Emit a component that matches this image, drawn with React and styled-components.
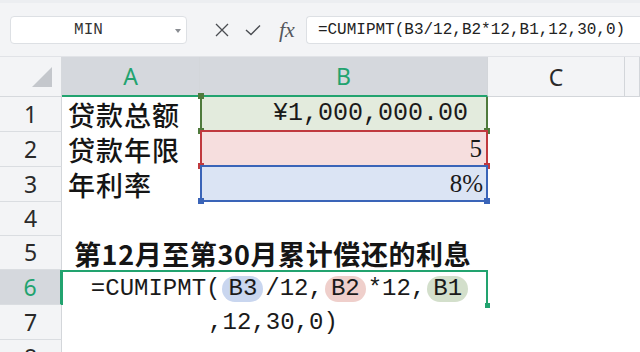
import React from 'react';
import styled, { createGlobalStyle, css } from 'styled-components';

const GlobalStyle = createGlobalStyle`
	html, body {
		margin: 0;
		padding: 0;
		background: #ffffff;
		overflow: hidden;
	}
	* {
		box-sizing: border-box;
	}
`;

const tones = {
	green: { bg: '#e3ebdd', line: '#4f7a3c', chip: '#d3dfcb' },
	red: { bg: '#f6dede', line: '#c0393e', chip: '#efcfcb' },
	blue: { bg: '#dbe4f4', line: '#3a64b8', chip: '#c9d6ef' },
};

const cjk = `'Noto Sans CJK SC', 'Noto Sans', sans-serif`;
const mono = `'Liberation Mono', 'DejaVu Sans Mono', monospace`;

const Page = styled.div`
	width: 640px;
	height: 352px;
	overflow: hidden;
	background: #fff;
`;

const Toolbar = styled.div`
	height: 57px;
	display: flex;
	align-items: center;
	padding-left: 10px;
	background: #f3f4f6;
	border-top: 3px solid #eceef1;
	border-bottom: 1px solid #e1e3e7;
`;

const NameBox = styled.div`
	width: 177px;
	height: 28px;
	display: flex;
	align-items: center;
	background: #fff;
	border: 1px solid #dde0e4;
	border-radius: 4px;
	position: relative;
	font-family: ${mono};
	font-size: 16px;
	color: #333;
	span {
		flex: 1;
		text-align: center;
		padding-right: 20px;
	}
	&::after {
		content: '';
		position: absolute;
		right: 5px;
		top: 12px;
		border-left: 3px solid transparent;
		border-right: 3px solid transparent;
		border-top: 4px solid #8a8d92;
	}
`;

const Actions = styled.div`
	display: flex;
	align-items: center;
	gap: 16px;
	margin-left: 28px;
	margin-right: 11px;
	color: #4a4d52;
`;

const Fx = styled.span`
	font-family: 'Liberation Serif', serif;
	font-style: italic;
	font-size: 22px;
	color: #55585d;
	margin-left: 2px;
`;

const FormulaBox = styled.div`
	flex: 1;
	height: 28px;
	display: flex;
	align-items: center;
	padding-left: 11px;
	background: #fff;
	border: 1px solid #dde0e4;
	border-right: none;
	border-radius: 4px 0 0 4px;
	font-family: ${mono};
	font-size: 16px;
	color: #222;
	white-space: nowrap;
	overflow: hidden;
`;

const Grid = styled.div`
	display: grid;
	grid-template-columns: 62px 138px 288px 137px 1fr;
	grid-template-rows: 40px 35px 35px 35px 34px 34px 35px 35px 35px;
`;

const Corner = styled.div`
	background: #f3f4f6;
	border-right: 1px solid #d6d9dd;
	border-bottom: 1px solid #d6d9dd;
	position: relative;
	&::after {
		content: '';
		position: absolute;
		right: 9px;
		bottom: 9px;
		border-left: 20px solid transparent;
		border-bottom: 20px solid #c4c7cc;
	}
`;

const ColHead = styled.div`
	display: flex;
	align-items: center;
	justify-content: center;
	font-family: 'Noto Sans', sans-serif;
	font-size: 23px;
	border-right: 1px solid #d3d6da;
	${(p) =>
		p.$active
			? css`
					background: #d5d8dd;
					color: #22a36f;
					border-bottom: 2px solid #22a36f;
			  `
			: css`
					background: #f3f4f6;
					color: #2a2a2a;
					border-bottom: 1px solid #d3d6da;
			  `}
`;

const RowHead = styled.div`
	display: flex;
	align-items: center;
	justify-content: center;
	font-family: 'Noto Sans', sans-serif;
	font-size: 23px;
	line-height: 1;
	border-right: 1px solid #d3d6da;
	border-bottom: 1px solid #dadde1;
	${(p) =>
		p.$active
			? css`
					background: #d5d8dd;
					color: #22a36f;
					border-right: 2px solid #22a36f;
			  `
			: css`
					background: #f3f4f6;
					color: #2a2a2a;
			  `}
`;

const Label = styled.div`
	display: flex;
	align-items: center;
	white-space: nowrap;
	line-height: 1;
	grid-column: ${(p) => p.$span || 'auto'};
	font-family: ${cjk};
	font-size: 27px;
	letter-spacing: ${(p) => (p.$bold ? 0.6 : 1)}px;
	font-weight: ${(p) => (p.$bold ? 700 : 500)};
	color: #151515;
	padding-left: ${(p) => (p.$indent ? 12 : 6)}px;
`;

const RefCell = styled.div`
	position: relative;
	display: flex;
	align-items: center;
	justify-content: flex-end;
	padding-right: ${(p) => p.$pad}px;
	background: ${(p) => tones[p.$tone].bg};
	border: 2px solid ${(p) => tones[p.$tone].line};
	border-top-width: ${(p) => (p.$tone === 'green' ? 0 : 2)}px;
	margin-top: ${(p) => (p.$tone === 'green' ? 0 : -2)}px;
	font-family: ${(p) => (p.$mono ? mono : `'Liberation Serif', serif`)};
	font-size: 25px;
	line-height: 1;
	color: #1a1a1a;
`;

const Handle = styled.i`
	position: absolute;
	width: 6px;
	height: 6px;
	background: ${(p) => tones[p.$tone].line};
	${(p) => (p.$left ? 'left: -4px;' : 'right: -4px;')}
	${(p) => (p.$top ? 'top: -4px;' : 'bottom: -4px;')}
`;

const EditCell = styled.div`
	grid-column: 2 / 4;
	position: relative;
	display: flex;
	align-items: center;
	justify-content: center;
	padding-left: 12px;
	border: 2px solid #22a36f;
	border-bottom: none;
	margin-left: -1px;
	font-family: ${mono};
	font-size: 24px;
	color: #1a1a1a;
	white-space: nowrap;
`;

const EditHandle = styled.i`
	position: absolute;
	right: -4px;
	bottom: -3px;
	width: 5px;
	height: 5px;
	background: #22a36f;
`;

const WrapLine = styled.div`
	grid-column: 2 / 4;
	display: flex;
	align-items: center;
	justify-content: center;
	padding-right: 4px;
	font-family: ${mono};
	font-size: 24px;
	color: #1a1a1a;
	white-space: nowrap;
`;

const Chip = styled.span`
	display: inline-block;
	padding: 0 6px;
	margin: 0 2px;
	line-height: 26px;
	border-radius: 13px;
	background: ${(p) => tones[p.$tone].chip};
`;

const Blank = styled.div``;

const CloseIcon = () => (
	<svg width="14" height="14" viewBox="0 0 14 14" fill="none" stroke="currentColor" strokeWidth="1.3">
		<path d="M1 1 L13 13 M13 1 L1 13" />
	</svg>
);

const CheckIcon = () => (
	<svg width="16" height="12" viewBox="0 0 16 12" fill="none" stroke="currentColor" strokeWidth="1.4">
		<path d="M1 6 L6 10.5 L15 1.5" />
	</svg>
);

const refRows = [
	{ label: '贷款总额', value: '¥1,000,000.00', tone: 'green', mono: true, pad: 18 },
	{ label: '贷款年限', value: '5', tone: 'red', pad: 4 },
	{ label: '年利率', value: '8%', tone: 'blue', pad: 3 },
];

const App = () => {
	return (
		<Page>
			<GlobalStyle />
			<Toolbar>
				<NameBox>
					<span>MIN</span>
				</NameBox>
				<Actions>
					<CloseIcon />
					<CheckIcon />
					<Fx>fx</Fx>
				</Actions>
				<FormulaBox>=CUMIPMT(B3/12,B2*12,B1,12,30,0)</FormulaBox>
			</Toolbar>
			<Grid>
				<Corner />
				<ColHead $active>A</ColHead>
				<ColHead $active>B</ColHead>
				<ColHead>C</ColHead>
				<ColHead />

				{refRows.map((r, i) => (
					<React.Fragment key={r.label}>
						<RowHead>{i + 1}</RowHead>
						<Label>{r.label}</Label>
						<RefCell $tone={r.tone} $mono={r.mono} $pad={r.pad}>
							{r.value}
							{r.tone === 'green' && <Handle $tone={r.tone} $left $top />}
							<Handle $tone={r.tone} $left />
							<Handle $tone={r.tone} />
						</RefCell>
						<Blank />
						<Blank />
					</React.Fragment>
				))}

				<RowHead>4</RowHead>
				<Blank />
				<Blank />
				<Blank />
				<Blank />

				<RowHead>5</RowHead>
				<Label $span="2 / 4" $bold $indent>
					第12月至第30月累计偿还的利息
				</Label>
				<Blank />
				<Blank />

				<RowHead $active>6</RowHead>
				<EditCell>
					=CUMIPMT(<Chip $tone="blue">B3</Chip>/12,<Chip $tone="red">B2</Chip>*12,
					<Chip $tone="green">B1</Chip>
					<EditHandle />
				</EditCell>
				<Blank />
				<Blank />

				<RowHead>7</RowHead>
				<WrapLine>,12,30,0)</WrapLine>
				<Blank />
				<Blank />

				<RowHead>8</RowHead>
				<Blank />
				<Blank />
				<Blank />
				<Blank />
			</Grid>
		</Page>
	);
};

export default App;
